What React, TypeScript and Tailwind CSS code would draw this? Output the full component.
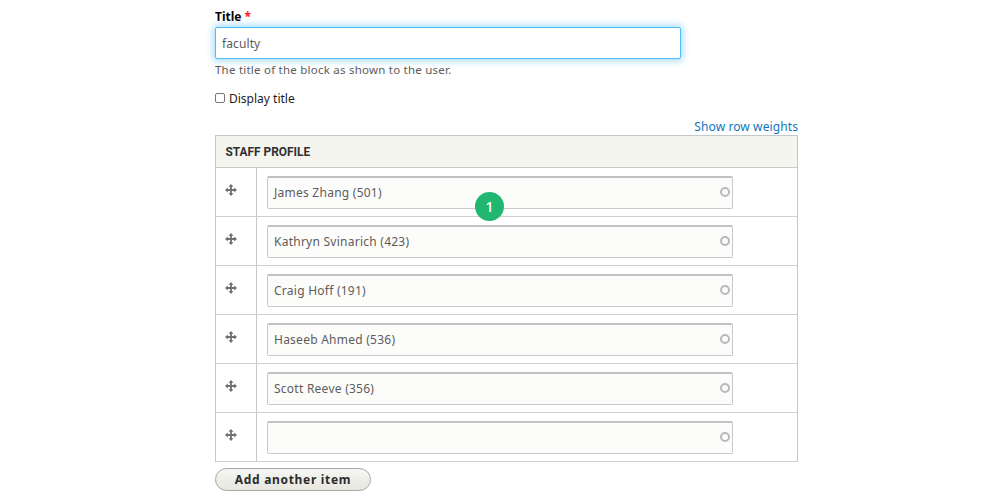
const rows = [
  'James Zhang (501)',
  'Kathryn Svinarich (423)',
  'Craig Hoff (191)',
  'Haseeb Ahmed (536)',
  'Scott Reeve (356)',
  '',
];

function MoveIcon() {
  return (
    <svg width="12" height="12" viewBox="0 0 12 12" className="block" fill="#707070">
      <path d="M6 0 8.5 2.8H6.9V5.1H9.2V3.5L12 6 9.2 8.5V6.9H6.9V9.2H8.5L6 12 3.5 9.2H5.1V6.9H2.8V8.5L0 6 2.8 3.5V5.1H5.1V2.8H3.5Z" />
    </svg>
  );
}

function StaffRow({ name }: { name: string }) {
  return (
    <div className="flex h-[49px] border-b border-[#cdd1cf]">
      <div className="w-[41px] shrink-0 border-r border-[#c4c8c8] pt-[15.5px] pl-[9px]">
        <MoveIcon />
      </div>
      <div className="pt-[8px] pl-[10px]">
        <div className="flex h-[33px] w-[466px] items-center justify-between rounded-[2px] border border-t-2 border-[#c9c9c9] border-t-[#c2c2c2] bg-[#fcfcfa] pr-[2px] pl-[6px]">
          <span className="text-[12px] leading-4 tracking-[0.25px] whitespace-pre text-[#5c5c5c]">{name}</span>
          <span className="mb-[2px] size-[10px] rounded-full border-2 border-[#b9b9b9]" />
        </div>
      </div>
    </div>
  );
}

export default function App() {
  return (
    <div className="relative h-[503px] w-[1008px] overflow-hidden bg-white font-['Noto_Sans',sans-serif] text-[12px] leading-4 text-[#1c1c1c]">
      <div className="ml-[215px] flex w-[583px] flex-col pt-[9px]">
        <label className="flex h-[18px] gap-[3px] font-bold text-black">
          <span className="text-[12px]">Title</span>
          <span className="text-[#ff2020]">*</span>
        </label>
        <div className="flex h-[32px] w-[466px] items-center rounded-[2px] border border-[#53bbf9] bg-white pt-px pl-[6px] text-[12px] tracking-[0.1px] text-[#5c5c5c] shadow-[0_0_7px_2px_#a9dcfb]">
          <span>faculty</span>
        </div>
        <div className="mt-[3px] text-[11.5px] tracking-[0.23px] text-[#5c5c5c]">
          <span>The title of the block as shown to the user.</span>
        </div>
        <label className="mt-[13px] flex h-[16px] gap-[4px] text-[12px]">
          <span className="mt-[2px] size-[10px] rounded-[2px] border border-[#767676] bg-white" />
          <span>Display title</span>
        </label>
        <div className="mt-[12px] flex h-[16px] justify-end text-[12px] tracking-[0.1px] text-[#0f76bd]">
          <span>Show row weights</span>
        </div>
        <div className="border-x border-t border-[#c4c8c8]">
          <div className="flex h-[32px] items-center border-b border-[#c8cac6] bg-[#f5f5f0] pl-[9.5px] font-['Roboto',sans-serif] text-[11.9px] font-bold text-[#303030]">
            <span>STAFF PROFILE</span>
          </div>
          {rows.map((name, index) => (
            <StaffRow key={index} name={name} />
          ))}
        </div>
        <button className="mt-[6px] flex h-[23px] w-[156px] items-center justify-center rounded-full border border-[#a6a6a6] bg-linear-to-b from-[#f6f6f3] to-[#e7e7df] text-[12px] font-bold tracking-[0.68px] text-[#2b2b2b]">
          <span>Add another item</span>
        </button>
      </div>
      <div className="absolute top-[192px] left-[475px] flex size-[29px] items-center justify-center rounded-full bg-[#22b770] pb-[2px] text-[15px] font-medium text-white">
        1
      </div>
    </div>
  );
}
